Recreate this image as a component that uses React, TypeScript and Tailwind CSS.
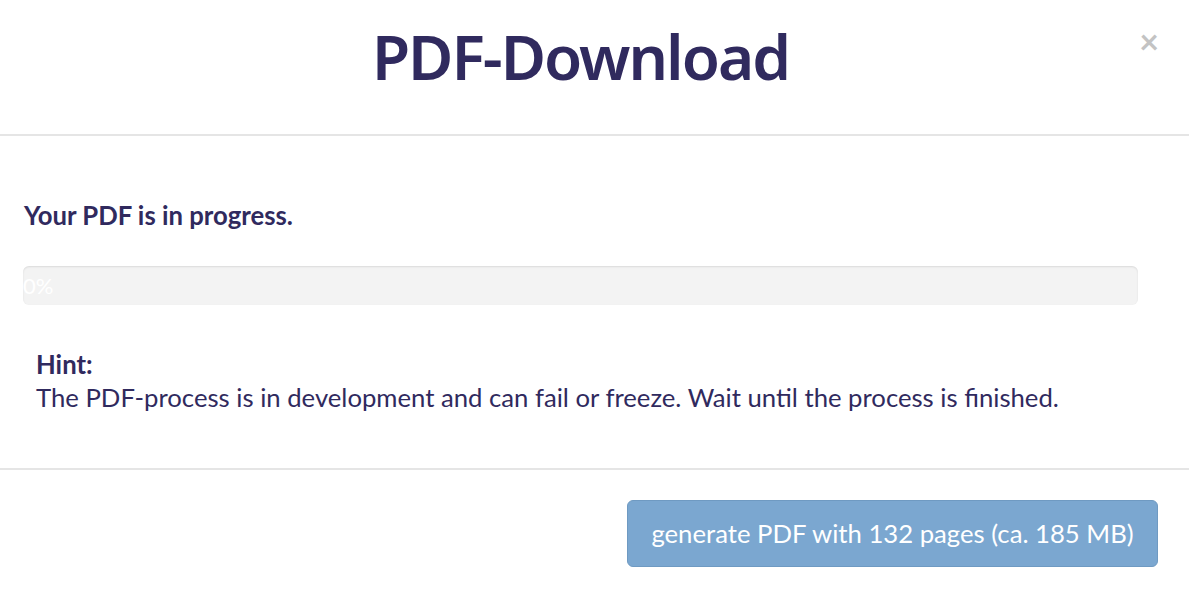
export default function App() {
  return (
    <div className="w-[1189px] h-[591px] bg-white text-[#302a5e] overflow-hidden" style={{ fontFamily: "Lato, 'Open Sans', sans-serif" }}>
      <div className="relative h-[136px] border-b-2 border-[#e5e5e5] flex items-center justify-center pr-[28px]">
        <h1 className="text-[62px] font-semibold tracking-[-2px] leading-none pb-[22px]" style={{ fontFamily: "'Noto Sans', sans-serif" }}>PDF-Download</h1>
        <button className="absolute right-[30px] top-[24px] text-[34px] font-bold text-[#c3c3c3] leading-none">×</button>
      </div>
      <div className="h-[332px] pl-[24px] pr-[51px] pt-[64px]">
        <div className="text-[25.7px] font-bold leading-[30px]">Your PDF is in progress.</div>
        <div className="mt-[36px] h-[39px] rounded-[6px] bg-[#f3f3f3] shadow-[inset_0_1px_2px_rgba(0,0,0,0.1)] text-white text-[22px] leading-[39px] -ml-[1px]">0%</div>
        <div className="pl-[12px] pt-[43px]">
          <div className="text-[25.7px] font-bold leading-[33px]">Hint:</div>
          <div className="text-[25.7px] leading-[33px]">The PDF-process is in development and can fail or freeze. Wait until the process is finished.</div>
        </div>
      </div>
      <div className="border-t-2 border-[#e5e5e5] flex justify-end pr-[31px] pt-[30px]">
        <button className="h-[67px] w-[531px] rounded-[6px] bg-[#7ba7d0] border border-[#6f9ac2] text-white text-[25.7px]">generate PDF with 132 pages (ca. 185 MB)</button>
      </div>
    </div>
  );
}
